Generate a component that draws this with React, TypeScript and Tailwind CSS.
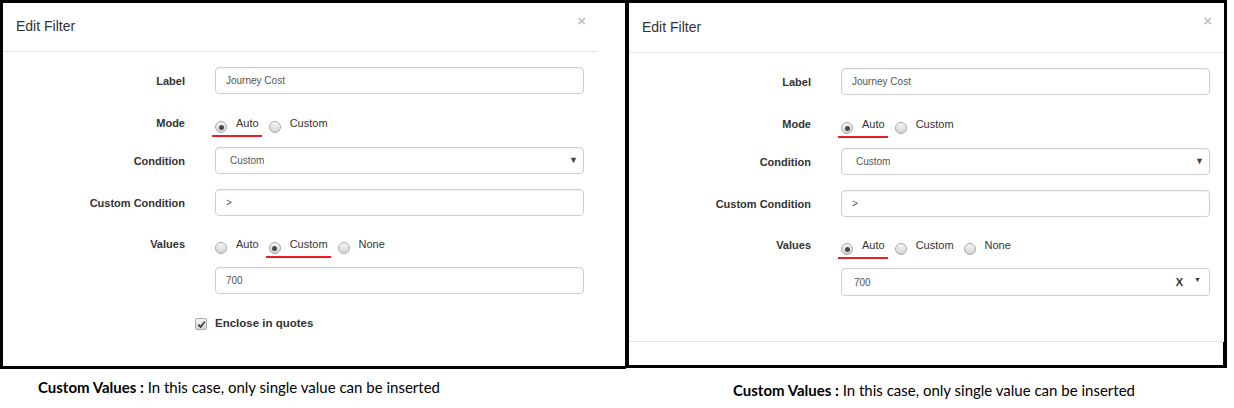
import React from "react";

const sans = "font-['Liberation_Sans',Arial,sans-serif]";

function Radio({ checked }: { checked?: boolean }) {
  return (
    <span className="mt-[5px] flex h-[12px] w-[12px] shrink-0 items-center justify-center rounded-full border border-[#a9a9a9] bg-gradient-to-b from-[#f6f6f6] to-[#d4d4d4]">
      {checked && <span className="h-[5px] w-[5px] rounded-full bg-[#4a4a4a]" />}
    </span>
  );
}

function Option({ label, checked, marked }: { label: string; checked?: boolean; marked?: boolean }) {
  return (
    <span
      className={
        marked
          ? "-ml-[3px] -mr-[3px] flex h-[21px] items-start gap-[9px] border-b-2 border-[#ed1c24] pl-[3px] pr-[3px]"
          : "flex h-[21px] items-start gap-[9px]"
      }
    >
      <Radio checked={checked} />
      <span className="text-[11px] leading-[14px] text-[#333]">{label}</span>
    </span>
  );
}

function Row({ label, center, children, className }: { label: string; center?: boolean; children: React.ReactNode; className?: string }) {
  return (
    <div className={`flex ${center ? "items-center" : "items-start"} ${className ?? ""}`}>
      <div className="w-[182px] text-right text-[11px] font-bold leading-[14px] text-[#333]">{label}</div>
      <div className="ml-[30px] w-[369px]">{children}</div>
    </div>
  );
}

function Input({ value, pad = "px-[10px]", children }: { value: string; pad?: string; children?: React.ReactNode }) {
  return (
    <div className={`flex h-[27px] items-center justify-between rounded-[4px] border border-[#cfcfcf] bg-white ${pad} text-[10px] text-[#555] shadow-[inset_0_1px_1px_rgba(0,0,0,0.06)]`}>
      <span>{value}</span>
      {children}
    </div>
  );
}

function Modal({ variant }: { variant: "custom" | "auto" }) {
  const custom = variant === "custom";
  return (
    <div className={`w-[595px] bg-white ${sans}`}>
      <div className={`flex justify-between border-b border-[#e5e5e5] pl-[13px] pr-[12px] ${custom ? "h-[49px]" : "h-[50px]"}`}>
        <h4 className="self-center pb-[1px] text-[14px] text-[#333]">Edit Filter</h4>
        <span className="mt-[10px] text-[15px] font-bold leading-[16px] text-[#c4c4c4]">×</span>
      </div>

      <Row label="Label" center className="mt-[15px]">
        <Input value="Journey Cost" />
      </Row>

      <Row label="Mode" className="mt-[22px]">
        <div className="flex gap-[10px]">
          <Option label="Auto" checked marked />
          <Option label="Custom" />
        </div>
      </Row>

      <Row label="Condition" center className="mt-[10px]">
        <Input value="Custom" pad="pl-[14px] pr-[5px]">
          <span className="text-[9px] text-[#444]">▼</span>
        </Input>
      </Row>

      <Row label="Custom Condition" center className="mt-[15px]">
        <Input value=">" />
      </Row>

      <Row label="Values" className="mt-[21px]">
        <div className="flex gap-[10px]">
          <Option label="Auto" checked={!custom} marked={!custom} />
          <Option label="Custom" checked={custom} marked={custom} />
          <Option label="None" />
        </div>
      </Row>

      {custom ? (
        <>
          <Row label="" center className="mt-[9px]">
            <Input value="700" />
          </Row>
          <div className="mt-[22px] flex items-start pl-[192px] pb-[20px]">
            <span className="mt-[2px] flex h-[12px] w-[12px] items-center justify-center rounded-[2px] border border-[#a9a9a9] bg-gradient-to-b from-[#f6f6f6] to-[#d4d4d4]">
              <svg viewBox="0 0 10 10" className="h-[9px] w-[9px]">
                <path d="M1.5 5.2 L4 7.8 L8.6 1.8" fill="none" stroke="#333" strokeWidth="1.8" />
              </svg>
            </span>
            <span className="ml-[8px] text-[11.5px] font-bold leading-[14px] text-[#333]">Enclose in quotes</span>
          </div>
        </>
      ) : (
        <>
          <Row label="" center className="mt-[9px]">
            <div className="flex h-[28px] items-center justify-between rounded-[4px] border border-[#cfcfcf] bg-white pl-[12px] pr-[8px] text-[10px] text-[#555]">
              <span>700</span>
              <span className="flex items-center gap-[11px]">
                <span className="text-[11px] font-bold text-[#333]">X</span>
                <span className="mb-[3px] text-[7px] text-[#333]">▼</span>
              </span>
            </div>
          </Row>
          <div className="mt-[45px] border-t border-[#e5e5e5]" />
        </>
      )}
    </div>
  );
}

export default function App() {
  return (
    <div className="h-[408px] w-[1234px] bg-white">
      <div className="flex items-start">
        <div className="h-[369px] w-[626px] border-y-[3px] border-l-[3px] border-black bg-white">
          <Modal variant="custom" />
        </div>
        <div className="-ml-[1px] h-[368px] w-[602px] border-x-4 border-y-[3px] border-black bg-white">
          <Modal variant="auto" />
        </div>
      </div>
      <div className="flex font-['Lato','Open_Sans',sans-serif] text-[15px] leading-[18px] text-black">
        <p className="mt-[9px] w-[625px] pl-[38px]">
          <span className="font-bold">Custom Values :</span> In this case, only single value can be inserted
        </p>
        <p className="mt-[12px] pl-[108px]">
          <span className="font-bold">Custom Values :</span> In this case, only single value can be inserted
        </p>
      </div>
    </div>
  );
}
